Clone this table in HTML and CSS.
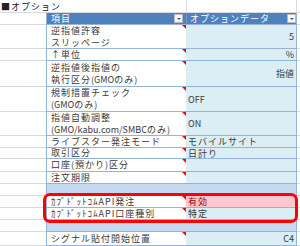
FILE: index.html
```html
<!DOCTYPE html>
<html lang="ja">

<head>
  <meta charset="UTF-8">
  <meta name="viewport" content="width=device-width, initial-scale=1.0">
  <title>オプション</title>
  <link rel="stylesheet" href="styles.css">
</head>

<body>
  <div class="sheet">
    <!-- title row -->
    <div class="cell a wide title">■オプション</div>
    <div class="cell c top"></div>
    <div class="cell d"></div>

    <!-- table header -->
    <div class="cell a"></div>
    <div class="cell b head">項目<span class="drop"></span></div>
    <div class="cell c head head_c">オプションデータ<span class="drop"></span></div>
    <div class="cell d"></div>

    <div class="cell a"></div>
    <div class="cell b note">逆指値許容<br>スリッページ</div>
    <div class="cell c right">5</div>
    <div class="cell d"></div>

    <div class="cell a"></div>
    <div class="cell b note">↑単位</div>
    <div class="cell c right">%</div>
    <div class="cell d"></div>

    <div class="cell a"></div>
    <div class="cell b note"><span>逆指値後指値の<br>執行区分<span class="en">(GMO</span>のみ)</span></div>
    <div class="cell c right">指値</div>
    <div class="cell d"></div>

    <div class="cell a"></div>
    <div class="cell b note"><span>規制措置チェック<br><span class="en">(GMO</span>のみ)</span></div>
    <div class="cell c"><span class="en">OFF</span></div>
    <div class="cell d"></div>

    <div class="cell a"></div>
    <div class="cell b note"><span>指値自動調整<br><span class="en">(GMO/kabu.com/SMBC</span>のみ)</span></div>
    <div class="cell c"><span class="en">ON</span></div>
    <div class="cell d"></div>

    <div class="cell a"></div>
    <div class="cell b note">ライブスター発注モード</div>
    <div class="cell c">モバイルサイト</div>
    <div class="cell d"></div>

    <div class="cell a"></div>
    <div class="cell b note">取引区分</div>
    <div class="cell c">日計り</div>
    <div class="cell d"></div>

    <div class="cell a"></div>
    <div class="cell b note">口座(預かり)区分</div>
    <div class="cell c"></div>
    <div class="cell d"></div>

    <div class="cell a"></div>
    <div class="cell b note">注文期限</div>
    <div class="cell c"></div>
    <div class="cell d"></div>

    <div class="cell a"></div>
    <div class="cell b blank"></div>
    <div class="cell c blank"></div>
    <div class="cell d"></div>

    <div class="cell a"></div>
    <div class="cell b note">ｶﾌﾞﾄﾞｯﾄｺﾑAPI発注</div>
    <div class="cell c bad">有効</div>
    <div class="cell d"></div>

    <div class="cell a"></div>
    <div class="cell b note">ｶﾌﾞﾄﾞｯﾄｺﾑAPI口座種別</div>
    <div class="cell c">特定</div>
    <div class="cell d"></div>

    <div class="cell a"></div>
    <div class="cell b blank"></div>
    <div class="cell c blank"></div>
    <div class="cell d"></div>

    <div class="cell a"></div>
    <div class="cell b note">シグナル貼付開始位置</div>
    <div class="cell c right">C4</div>
    <div class="cell d"></div>

    <div class="mark"></div>
  </div>
</body>

</html>
```

FILE: styles.css
```css
body {
  margin: 0;
  background-color: #fff;
  overflow: hidden;
  font-family: "Noto Sans CJK JP", "Noto Sans", sans-serif;
  font-size: 9px;
  letter-spacing: 1px;
  color: #3a3a3a;
}

.sheet {
  position: relative;
  display: grid;
  grid-template-columns: 46px 140px 111px 3px;
  grid-template-rows: 13px 12px 24px 12px 26px 25px 24px 12px 11px 13px 12px 12px 12px 12px 12px 14px;
  width: 300px;
}

.cell {
  box-sizing: border-box;
  display: flex;
  align-items: center;
  line-height: 11px;
  white-space: nowrap;
  border-bottom: 1px solid #dadada;
}

.en {
  letter-spacing: 0;
}

.wide {
  grid-column: 1 / 3;
}

.title {
  padding-left: 1px;
  color: #222;
}

.top {
  border-left: 1px solid #dadada;
  border-right: 1px solid #dadada;
}

.b {
  position: relative;
  padding-left: 4px;
  line-height: 12px;
  background-color: #fff;
  border-left: 1px solid #95b3d7;
  border-bottom-color: #95b3d7;
}

.c {
  padding: 0 2px;
  overflow: hidden;
  background-color: #daeef3;
  border-right: 1px solid #95b3d7;
  border-bottom-color: #95b3d7;
}

.c.top {
  background-color: #fff;
  border-bottom-color: #dadada;
  border-right-color: #dadada;
}

.right {
  justify-content: flex-end;
  letter-spacing: 0;
}

.head {
  justify-content: space-between;
  padding-right: 3px;
  line-height: 11px;
  background-color: #4f81bd;
  color: #fff;
  border-bottom-color: #95b3d7;
}

.head_c {
  padding-left: 3px;
  padding-right: 0;
  border-left: 1px solid #6f98c9;
}

.drop {
  display: flex;
  align-items: center;
  justify-content: center;
  box-sizing: border-box;
  width: 9px;
  height: 9px;
  background-color: #f7f7f7;
  border: 1px solid #b8b8b8;
}

.drop::after {
  content: "";
  border-left: 2px solid transparent;
  border-right: 2px solid transparent;
  border-top: 2px solid #555;
}

.note::after {
  content: "";
  position: absolute;
  top: 0;
  right: 0;
  border-top: 4px solid #f00;
  border-left: 4px solid transparent;
}

.blank {
  background-color: #c5d9f1;
}

.bad {
  background-color: #ffc7ce;
  color: #9c0006;
}

/* red outline drawn over the two API rows */
.mark {
  position: absolute;
  left: 43px;
  top: 193px;
  width: 255px;
  height: 30px;
  box-sizing: border-box;
  border: 3px solid #f00;
  border-radius: 7px;
}
```
